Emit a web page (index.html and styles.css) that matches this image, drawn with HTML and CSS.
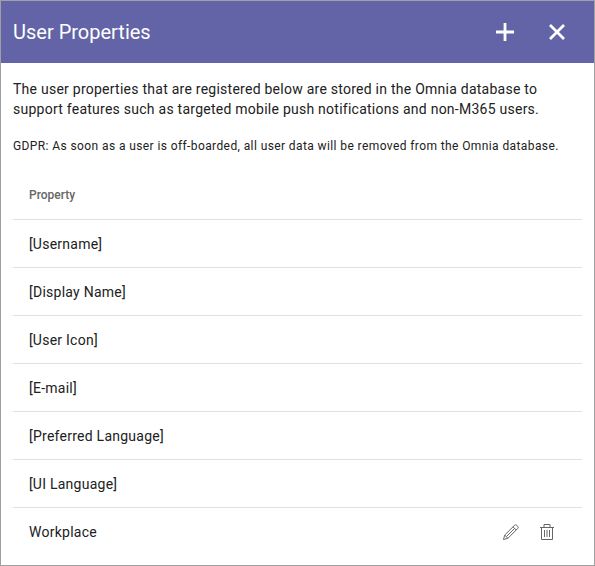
FILE: index.html
```html
<!DOCTYPE html>
<html lang="en">
<head>
<meta charset="utf-8">
<title>User Properties</title>
<link rel="stylesheet" href="styles.css">
</head>
<body>
<main class="panel">
  <header class="toolbar">
    <h1>User Properties</h1>
    <button class="tool" aria-label="Add"><svg width="20" height="20" viewBox="0 0 20 20"><path d="M10 1v18M1 10h18"/></svg></button>
    <button class="tool" aria-label="Close"><svg width="20" height="20" viewBox="0 0 20 20"><path d="M3 3l14 14M17 3L3 17"/></svg></button>
  </header>
  <section class="content">
    <p class="intro">The user properties that are registered below are stored in the Omnia database to<br>support features such as targeted mobile push notifications and non-M365 users.</p>
    <p class="gdpr">GDPR: As soon as a user is off-boarded, all user data will be removed from the Omnia database.</p>
    <div class="list">
      <div class="head">Property</div>
      <div class="row">[Username]</div>
      <div class="row">[Display Name]</div>
      <div class="row">[User Icon]</div>
      <div class="row">[E-mail]</div>
      <div class="row">[Preferred Language]</div>
      <div class="row">[UI Language]</div>
      <div class="row last"><span>Workplace</span>
        <span class="actions">
          <svg width="18" height="18" viewBox="0 0 18 18"><path d="M1.5 16.5l1.2-4.4L12.4 2.4q1.2-1.2 2.4 0l.8.8q1.2 1.2 0 2.4L5.9 15.3zM11 3.8L14.2 7M2.7 12.1l3.2 3.2M4.4 13.6l8.2-8.2"/></svg>
          <svg width="18" height="18" viewBox="0 0 18 18"><path d="M2 4.5h14M6 4.5v-3h6v3M3.5 4.5v12h11v-12M6.5 7v7M9 7v7M11.5 7v7"/></svg>
        </span>
      </div>
    </div>
  </section>
</main>
</body>
</html>
```
FILE: styles.css
```css
* { box-sizing: border-box; }
body { margin: 0; font-family: Roboto, sans-serif; color: #212121; background: #fff; }
.panel { height: 566px; border: 1px solid #a0a0a0; overflow: hidden; }
.toolbar { height: 62px; background: #6264a7; color: #fff; display: flex; align-items: center; padding: 0 27px 0 12px; gap: 32px; }
.toolbar h1 { flex: 1; margin: 0; font-size: 20px; font-weight: 400; line-height: 24px; }
.tool { border: 0; padding: 0; background: none; width: 20px; height: 20px; color: #fff; }
svg { display: block; fill: none; stroke: currentColor; }
.tool svg { stroke-width: 2.8; }
.content { padding: 16px 12px 0; }
p { margin: 0; white-space: nowrap; }
.intro { font-size: 14px; line-height: 20px; letter-spacing: .25px; }
.gdpr { margin-top: 17px; font-size: 12px; line-height: 20px; letter-spacing: .4px; }
.list { margin-top: 16px; }
.head { height: 48px; padding: 0 16px; line-height: 47px; font-size: 12px; font-weight: 500; color: #666; border-bottom: 1px solid #e0e0e0; }
.row { height: 48px; padding: 0 16px; display: flex; align-items: center; font-size: 14px; letter-spacing: .25px; border-bottom: 1px solid #e0e0e0; }
.last { border: 0; justify-content: space-between; padding-right: 26px; }
.actions { display: flex; gap: 18px; color: #666; }
```
